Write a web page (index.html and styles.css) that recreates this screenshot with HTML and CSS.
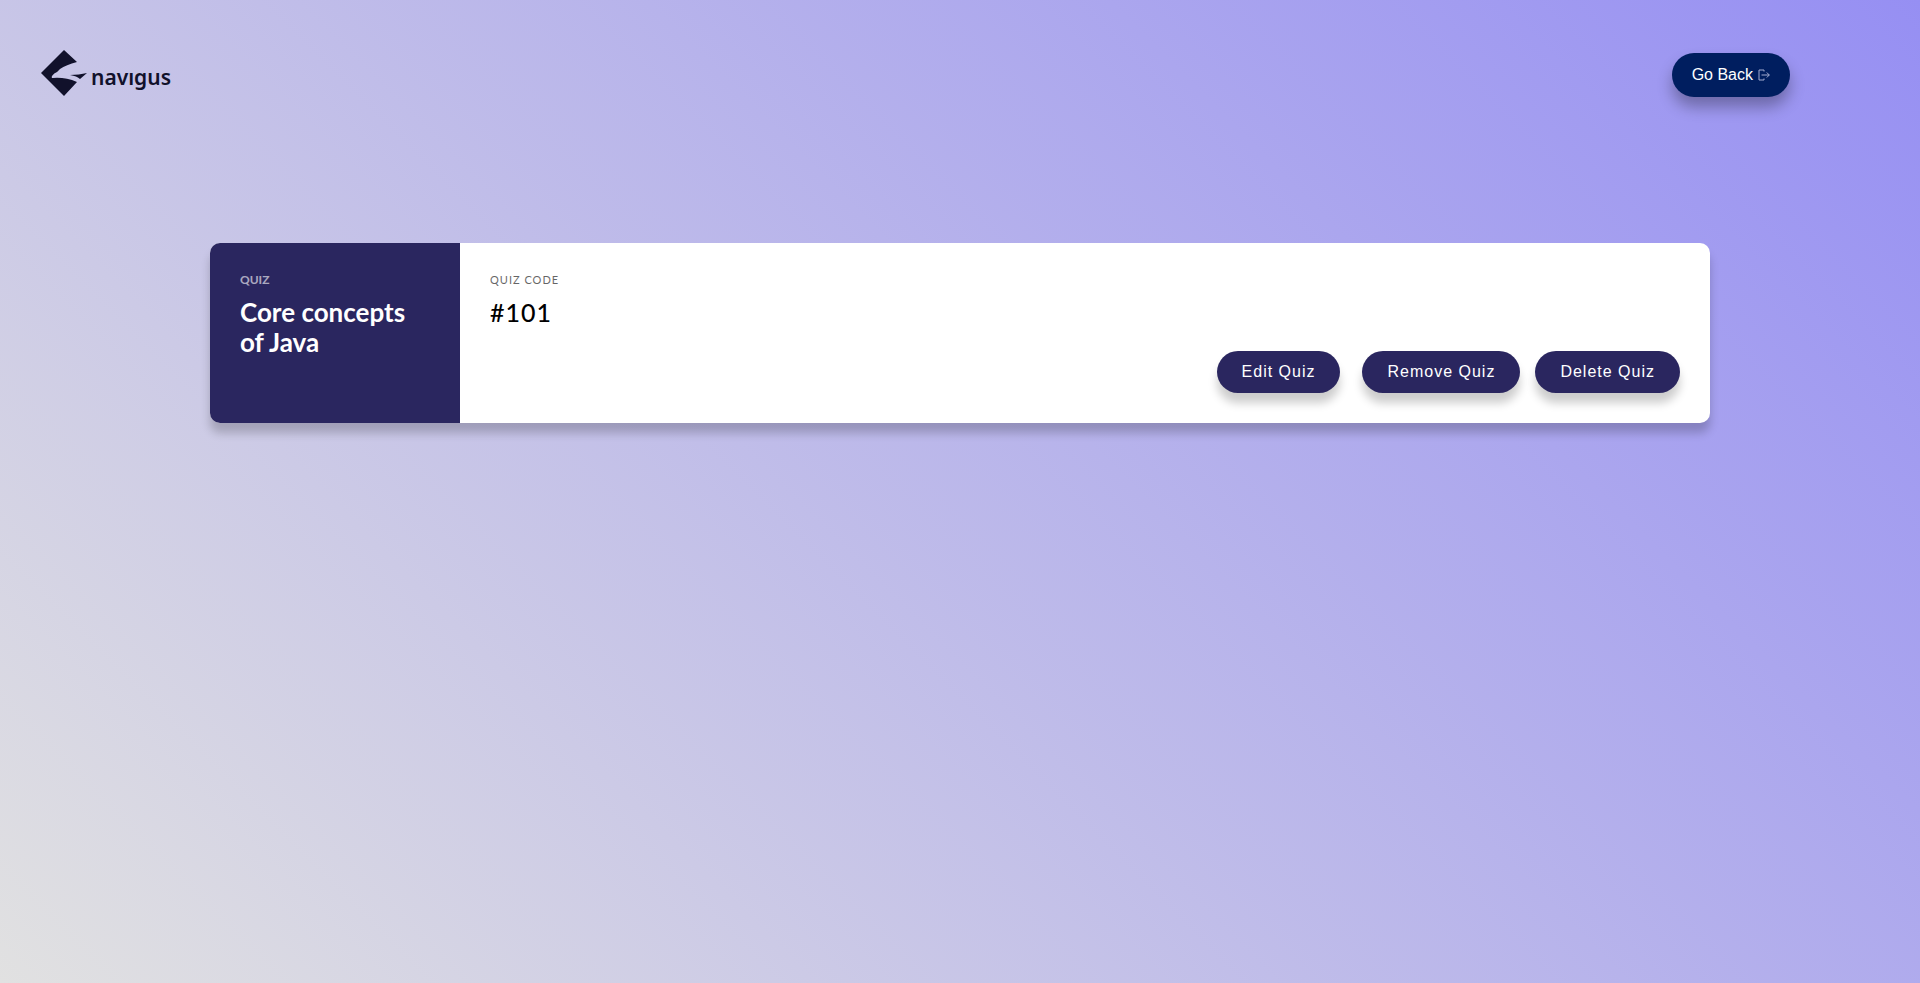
FILE: index.html
```html
<!DOCTYPE html>
<html lang="en">
<head>
<meta charset="utf-8">
<title>Quiz</title>
<link rel="stylesheet" href="styles.css">
</head>
<body>
<header class="topbar">
  <a class="brand" href="#">
    <svg class="brand-mark" viewBox="0 0 46 46" aria-hidden="true">
      <path d="M23 0 36 12Q25 15 19 19L16 22Q13 23 11 26Q10 28 12 28Q24 27 36 32L23 46 0 23Z"/>
      <path d="M29 25Q38 25 46 23L39 29Q36 26 29 25Z"/>
    </svg>
    <span class="brand-name">navıgus</span>
  </a>
  <button class="back" type="button">Go Back
    <svg class="back-icon" viewBox="0 0 12 12" aria-hidden="true"><path d="M6 2.5V1H1V11H6V9.500M3.500 6H11.300M8.800 3.500 11.300 6 8.800 8.500"/></svg>
  </button>
</header>
<main class="card">
  <section class="card-side">
    <h6 class="label label-side">QUIZ</h6>
    <h2 class="title">Core concepts of Java</h2>
  </section>
  <section class="card-body">
    <h6 class="label label-code">QUIZ CODE</h6>
    <h2 class="code">#101</h2>
    <div class="actions">
      <button class="action edit" type="button">Edit Quiz</button>
      <button class="action" type="button">Remove Quiz</button>
      <button class="action" type="button">Delete Quiz</button>
    </div>
  </section>
</main>
</body>
</html>
```
FILE: styles.css
```css
* { box-sizing: border-box; }
body {
  margin: 0;
  min-height: 100vh;
  background: linear-gradient(45deg, #e1e1e1, #968ff3);
  font-family: Lato, "Open Sans", sans-serif;
}
.topbar {
  display: flex;
  justify-content: space-between;
  align-items: flex-start;
  padding: 50px 130px 0 41px;
}
.brand {
  display: flex;
  align-items: center;
  gap: 4px;
  color: #11112b;
  text-decoration: none;
}
.brand-mark { width: 46px; height: 46px; fill: currentColor; }
.brand-name {
  padding-top: 8px;
  font: 600 21px/30px "Noto Sans", sans-serif;
}
.back {
  display: flex;
  align-items: center;
  gap: 5px;
  height: 44px;
  margin-top: 3px;
  padding: 0 20px;
  border: 0;
  border-radius: 50px;
  background: #001e5f;
  color: #fff;
  font: 16px "Liberation Sans", Arial, sans-serif;
  box-shadow: 0 10px 15px rgba(0, 0, 0, 0.3);
}
.back-icon {
  width: 12px;
  height: 12px;
  fill: none;
  stroke: #a3abd0;
}
.card {
  display: flex;
  max-width: 1500px;
  min-height: 180px;
  margin: 146px auto 0;
  border-radius: 10px;
  background: #fff;
  box-shadow: 0 10px 10px rgba(0, 0, 0, 0.2);
}
.card-side {
  width: 250px;
  padding: 30px;
  border-radius: 10px 0 0 10px;
  background: #2a265f;
  color: #fff;
}
.card-body {
  flex: 1;
  display: flex;
  flex-direction: column;
  padding: 30px;
}
.label {
  margin: 0;
  font-size: 11px;
  line-height: 14px;
  letter-spacing: 1px;
  opacity: 0.6;
}
.label-side { letter-spacing: 0; font-size: 12px; }
.label-code { font-weight: 400; }
.title, .code {
  margin: 10px 0 0;
  font-size: 26px;
  line-height: 30px;
}
.code { font-size: 25px; font-weight: 500; letter-spacing: 1px; }
.actions {
  display: flex;
  justify-content: flex-end;
  gap: 15px;
  margin-top: auto;
}
.action {
  height: 42px;
  padding: 0 25px;
  border: 0;
  border-radius: 50px;
  background: #2a265f;
  color: #fff;
  font: 16px "Liberation Sans", Arial, sans-serif;
  letter-spacing: 1px;
  box-shadow: 0 10px 10px rgba(0, 0, 0, 0.2);
}
.edit { margin-right: 7px; }
```
